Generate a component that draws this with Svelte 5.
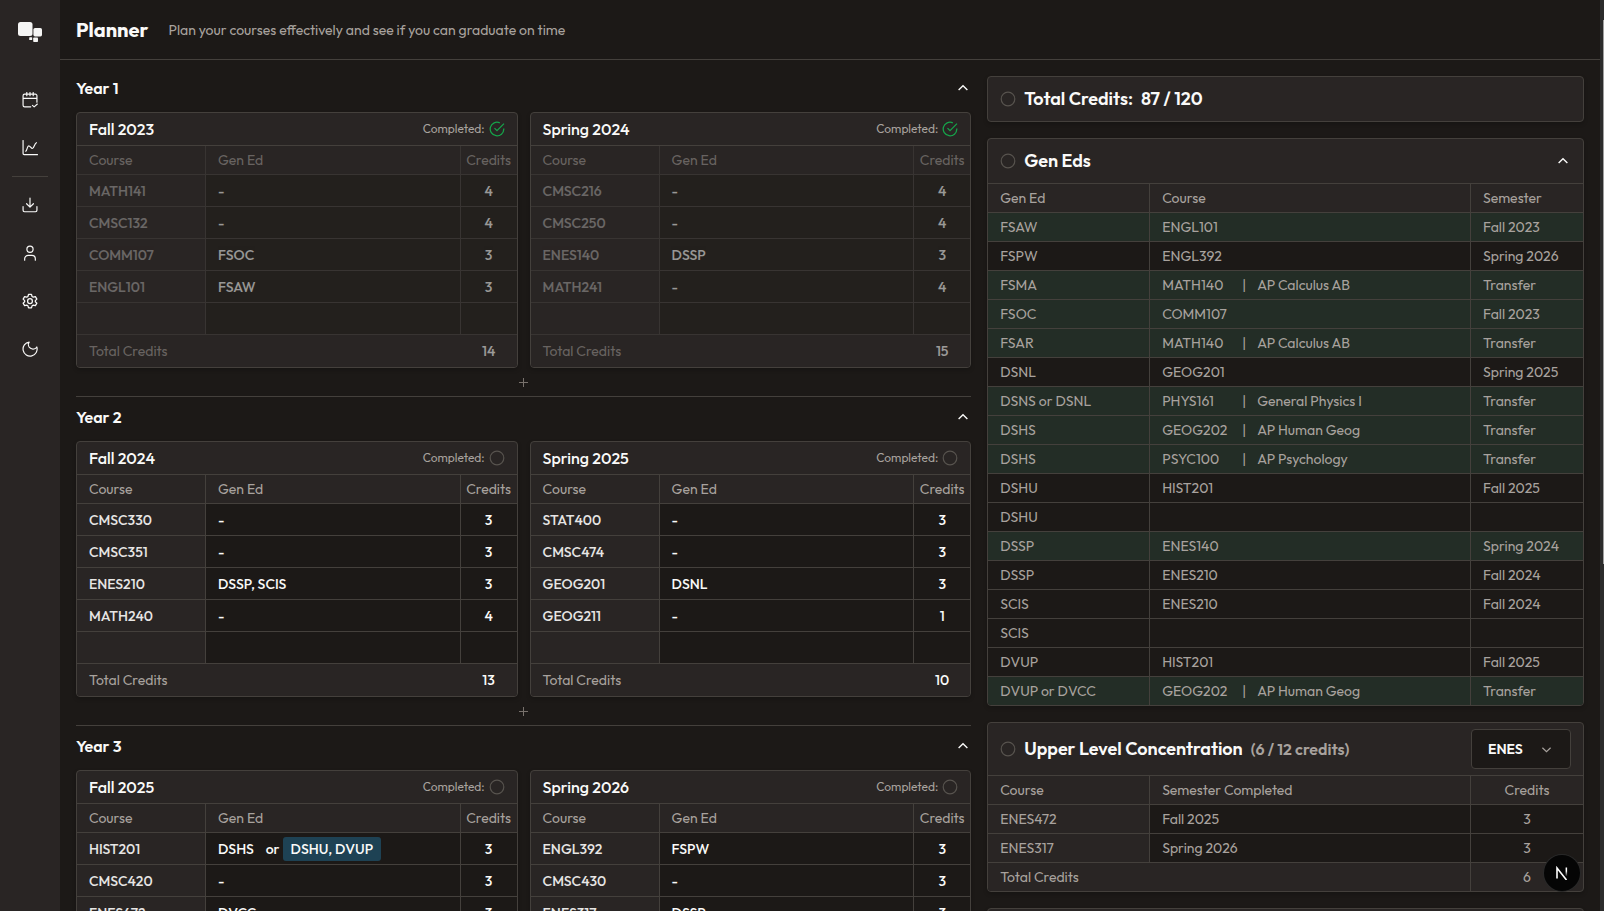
<script>
  const terms = [
    { year: 'Year 1', plans: [
      { name: 'Fall 2023', done: true, total: 14, rows: [['MATH141', '-', 4], ['CMSC132', '-', 4], ['COMM107', 'FSOC', 3], ['ENGL101', 'FSAW', 3], ['', '', '']] },
      { name: 'Spring 2024', done: true, total: 15, rows: [['CMSC216', '-', 4], ['CMSC250', '-', 4], ['ENES140', 'DSSP', 3], ['MATH241', '-', 4], ['', '', '']] }
    ] },
    { year: 'Year 2', plans: [
      { name: 'Fall 2024', done: false, total: 13, rows: [['CMSC330', '-', 3], ['CMSC351', '-', 3], ['ENES210', 'DSSP, SCIS', 3], ['MATH240', '-', 4], ['', '', '']] },
      { name: 'Spring 2025', done: false, total: 10, rows: [['STAT400', '-', 3], ['CMSC474', '-', 3], ['GEOG201', 'DSNL', 3], ['GEOG211', '-', 1], ['', '', '']] }
    ] },
    { year: 'Year 3', plans: [
      { name: 'Fall 2025', done: false, total: 9, rows: [['HIST201', ['DSHS', 'DSHU, DVUP'], 3], ['CMSC420', '-', 3], ['ENES472', 'DVCC', 3], ['', '', '']] },
      { name: 'Spring 2026', done: false, total: 9, rows: [['ENGL392', 'FSPW', 3], ['CMSC430', '-', 3], ['ENES317', 'DSSP', 3], ['', '', '']] }
    ] }
  ];

  const genEds = [
    ['FSAW', 'ENGL101', '', 'Fall 2023', true],
    ['FSPW', 'ENGL392', '', 'Spring 2026', false],
    ['FSMA', 'MATH140', 'AP Calculus AB', 'Transfer', true],
    ['FSOC', 'COMM107', '', 'Fall 2023', true],
    ['FSAR', 'MATH140', 'AP Calculus AB', 'Transfer', true],
    ['DSNL', 'GEOG201', '', 'Spring 2025', false],
    ['DSNS or DSNL', 'PHYS161', 'General Physics I', 'Transfer', true],
    ['DSHS', 'GEOG202', 'AP Human Geog', 'Transfer', true],
    ['DSHS', 'PSYC100', 'AP Psychology', 'Transfer', true],
    ['DSHU', 'HIST201', '', 'Fall 2025', false],
    ['DSHU', '', '', '', false],
    ['DSSP', 'ENES140', '', 'Spring 2024', true],
    ['DSSP', 'ENES210', '', 'Fall 2024', false],
    ['SCIS', 'ENES210', '', 'Fall 2024', false],
    ['SCIS', '', '', '', false],
    ['DVUP', 'HIST201', '', 'Fall 2025', false],
    ['DVUP or DVCC', 'GEOG202', 'AP Human Geog', 'Transfer', true]
  ];
</script>

{#snippet ring()}
  <svg class="ring" viewBox="0 0 16 16" aria-hidden="true"><circle cx="8" cy="8" r="6.8" /></svg>
{/snippet}

{#snippet caret()}
  <svg class="caret" viewBox="0 0 15 15" aria-hidden="true"><path d="M3.4 9.3 7.5 5.4l4.1 3.9" /></svg>
{/snippet}

<div class="app">
  <nav class="side">
    <a href="#home" class="logo" aria-label="Home">
      <svg viewBox="0 0 24 20">
        <rect x="0" y="0" width="14.5" height="14" rx="2.5" />
        <rect x="15.4" y="6" width="8.6" height="8.4" rx="1.6" />
        <rect x="15.2" y="15.4" width="4.8" height="4.6" rx="0.8" />
        <rect x="11.2" y="15.2" width="3" height="2.8" rx="0.6" />
      </svg>
    </a>
    <div class="group">
      <a href="#planner" aria-label="Planner"><svg viewBox="0 0 15 15"><path d="M8.200 13.900H2.500A1.500 1.500 0 0 1 1 12.400V3.500A1.500 1.500 0 0 1 2.500 2h10A1.500 1.500 0 0 1 14 3.500V9.500M1 6h13M4.500 .5V3.500M7.500 .5V3.500M10.500 .5V3.500M9.800 12.500l1.600 1.400 3-2.600" /></svg></a>
      <a href="#stats" aria-label="Statistics"><svg viewBox="0 0 15 15"><path d="M1 .5V12.700a1 1 0 0 0 1 1h12.500M3.500 10.500C5 9.500 4.800 5.500 6.300 5.500S8.300 8 9.800 8 11.500 3.500 13.500 2.500" /></svg></a>
    </div>
    <div class="group">
      <a href="#import" aria-label="Import"><svg viewBox="0 0 15 15"><path d="M7.500 1v8.300M4.300 6.300l3.200 3.200 3.200-3.200M1 9v3.500A1.300 1.300 0 0 0 2.300 13.800h10.400a1.300 1.300 0 0 0 1.300-1.300V9" /></svg></a>
      <a href="#account" aria-label="Account"><svg viewBox="0 0 15 15"><circle cx="7.500" cy="4" r="2.900" /><path d="M2.500 14.200v-1.200a3.300 3.300 0 0 1 3.300-3.300h3.400a3.300 3.300 0 0 1 3.300 3.300v1.200" /></svg></a>
      <a href="#settings" aria-label="Settings"><svg viewBox="0 0 24 24" class="wide"><path d="M9.800 2h4.400l.9 3.200 1.800 1 3.200-.8 2.200 3.800L20 11.500v1.600l2.300 2.100-2.200 3.800-3.200-.8-1.800 1-.9 3.200H9.800l-.9-3.200-1.800-1-3.200.8-2.200-3.800L4 13.100v-1.600L1.700 9.200l2.200-3.800 3.200.8 1.800-1z" /><circle cx="12" cy="12.200" r="3.600" /></svg></a>
      <button aria-label="Toggle theme"><svg viewBox="0 0 15 15"><path d="M6.700 1a3.900 3.900 0 0 0 7.200 4.600A6.600 6.600 0 1 1 6.700 1z" /></svg></button>
    </div>
  </nav>

  <div class="page">
    <header>
      <h1>Planner</h1>
      <p>Plan your courses effectively and see if you can graduate on time</p>
    </header>

    <main>
      <div class="years">
        {#each terms as term}
          <section class="year">
            <div class="year-head">
              <h2>{term.year}</h2>
              <button class="plain" aria-label="Collapse {term.year}">{@render caret()}</button>
            </div>
            <div class="pair">
              {#each term.plans as plan}
                <article class="card">
                  <div class="plan-head">
                    <h3>{plan.name}</h3>
                    <button class="plain status">
                      Completed:
                      {#if plan.done}
                        <svg class="ring ok" viewBox="0 0 16 16" aria-hidden="true"><path d="M14.800 7.400V8A6.800 6.800 0 1 1 10.800 1.800M15 2.600 8 9.600 5.500 7.100" /></svg>
                      {:else}
                        {@render ring()}
                      {/if}
                    </button>
                  </div>
                  <table class="plan" class:done={plan.done}>
                    <colgroup><col class="c1" /><col /><col class="c3" /></colgroup>
                    <thead><tr><th><span>Course</span></th><th><span>Gen Ed</span></th><th><span>Credits</span></th></tr></thead>
                    <tbody>
                      {#each plan.rows as [course, gen, credits]}
                        <tr>
                          <td><span>{course}</span></td>
                          <td>
                            {#if Array.isArray(gen)}
                              <div class="options"><button class="plain">{gen[0]}</button><span>or</span><button class="plain chosen">{gen[1]}</button></div>
                            {:else}
                              <span>{gen}</span>
                            {/if}
                          </td>
                          <td><span>{credits}</span></td>
                        </tr>
                      {/each}
                    </tbody>
                    <tfoot><tr><td colspan="2"><span>Total Credits</span></td><td><span>{plan.total}</span></td></tr></tfoot>
                  </table>
                </article>
              {/each}
            </div>
            <div class="add"><button class="plain" aria-label="Add semester"><svg viewBox="0 0 9 9"><path d="M4.500 0v9M0 4.500h9" /></svg></button></div>
          </section>
        {/each}
      </div>

      <div class="reqs">
        <article class="card"><div class="req-head">{@render ring()}<h2>Total Credits:</h2><h2>87 / 120</h2></div></article>

        <article class="card">
          <div class="req-head lined">{@render ring()}<h2>Gen Eds</h2><button class="plain end" aria-label="Collapse Gen Eds">{@render caret()}</button></div>
          <table class="req">
            <colgroup><col class="r1" /><col /><col class="r3" /></colgroup>
            <thead><tr><th>Gen Ed</th><th>Course</th><th>Semester</th></tr></thead>
            <tbody>
              {#each genEds as [code, course, exam, when, met]}
                <tr class:met>
                  <td>{code}</td>
                  <td><div class="course"><span>{course}</span>{#if exam}<i>|</i><span>{exam}</span>{/if}</div></td>
                  <td>{when}</td>
                </tr>
              {/each}
            </tbody>
          </table>
        </article>

        <article class="card">
          <div class="req-head lined tall">
            {@render ring()}
            <h2>Upper Level Concentration</h2><span class="sub">(6 / 12 credits)</span>
            <div class="picker">
              <select aria-label="Concentration"><option>ENES</option></select>
              <svg viewBox="0 0 15 15" aria-hidden="true"><path d="M3.400 5.700 7.500 9.600l4.100-3.900" /></svg>
            </div>
          </div>
          <table class="req upper">
            <colgroup><col class="r1" /><col /><col class="r3" /></colgroup>
            <thead><tr><th>Course</th><th>Semester Completed</th><th>Credits</th></tr></thead>
            <tbody>
              <tr><td>ENES472</td><td>Fall 2025</td><td>3</td></tr>
              <tr><td>ENES317</td><td>Spring 2026</td><td>3</td></tr>
            </tbody>
            <tfoot><tr><td colspan="2">Total Credits</td><td>6</td></tr></tfoot>
          </table>
        </article>

        <article class="card"><div class="req-head">{@render ring()}</div></article>
      </div>
    </main>
  </div>

  <div class="track"><div class="thumb"></div></div>

  <button class="dev" aria-label="Developer tools">
    <svg viewBox="0 0 14 14" aria-hidden="true">
      <defs><linearGradient id="fade" x1="0" y1="0" x2="0" y2="1"><stop offset="0.4" stop-color="#fff" /><stop offset="1" stop-color="#fff" stop-opacity="0" /></linearGradient></defs>
      <path d="M2 12.500V2l9.500 12" stroke="#fff" />
      <rect x="10.600" y="1.500" width="1.500" height="9" fill="url(#fade)" />
    </svg>
  </button>
</div>

<style>
  :global(body) { margin: 0; background: #1c1917; }
  .app {
    --line: #44403c;
    --panel: #292524;
    --muted: #a8a29e;
    height: 100vh; overflow: hidden; display: flex; color: #fafaf9; background: #1c1917;
    font: 14px/20px Outfit, Lato, sans-serif;
  }
  h1, h2, h3, p { margin: 0; }
  a, button, select { color: inherit; font: inherit; }
  svg { display: block; fill: none; stroke: currentColor; }
  .plain { border: 0; background: none; padding: 0; }

  .side { flex: 0 0 60px; background: var(--panel); display: flex; flex-direction: column; align-items: center; }
  .logo { margin: 22px 0 34px; }
  .logo svg { width: 24px; height: 20px; fill: #f5f5f4; stroke: none; }
  .group { width: 36px; display: flex; flex-direction: column; }
  .group + .group { border-top: 1px solid var(--line); margin-top: 4px; padding-top: 4px; }
  .group a, .group button { height: 48px; display: grid; place-items: center; background: none; border: 0; padding: 0; }
  .group svg { width: 16px; height: 16px; stroke-width: 1.1; stroke-linecap: round; stroke-linejoin: round; }
  .group svg.wide { stroke-width: 1.9; }

  .page { flex: 1; min-width: 0; }
  header { height: 59px; border-bottom: 1px solid var(--line); padding: 0 16px; display: flex; align-items: center; gap: 20px; }
  h1 { font-size: 20px; font-weight: 700; }
  header p { color: var(--muted); }
  main { display: grid; grid-template-columns: 3fr 2fr; gap: 16px; padding: 0 16px; }
  .years, .reqs { min-width: 0; }
  .years { padding-top: 8px; }
  .year + .year { border-top: 1px solid var(--line); }
  .year-head { height: 40px; padding-bottom: 4px; display: flex; align-items: center; justify-content: space-between; }
  .year-head h2 { font-size: 16px; font-weight: 600; }
  .caret { width: 16px; height: 16px; stroke-width: 1.3; }
  .pair { display: grid; grid-template-columns: 1fr 1fr; gap: 12px; }
  .card { min-width: 0; border: 1px solid var(--line); border-radius: 4px; background: var(--panel); overflow: hidden; box-shadow: 0 2px 4px #0003; }
  .plan-head { height: 32px; padding: 0 12px; display: flex; align-items: center; justify-content: space-between; border-bottom: 1px solid var(--line); }
  h3 { font-size: 16px; font-weight: 500; }
  .status { display: flex; align-items: center; gap: 4px; color: var(--muted); font-size: 12px; }
  .ring { flex: none; width: 16px; height: 16px; color: #57534e; stroke-width: 1.2; }
  .ok { color: #16a34a; stroke-width: 1.3; }

  table { width: 100%; table-layout: fixed; border-collapse: separate; border-spacing: 0; }
  th, td { box-sizing: border-box; padding: 0 12px; text-align: left; font-weight: 400; border-bottom: 1px solid var(--line); border-right: 1px solid var(--line); white-space: nowrap; }
  th:last-child, td:last-child { border-right: 0; }
  tfoot td { border-bottom: 0; }
  th { color: var(--muted); height: 29px; }
  tbody td { background: #1c1917; }
  .c1 { width: 129px; }
  .c3 { width: 56px; }
  .plan td { height: 32px; font-weight: 500; }
  .plan tbody td:first-child { background: var(--panel); color: #e7e5e4; }
  .plan th:last-child, .plan td:last-child { padding: 0; text-align: center; }
  .plan tfoot td { background: var(--panel); border-right: 0; }
  .plan tfoot td:first-child { color: var(--muted); font-weight: 400; }
  .done span { opacity: 0.55; }
  .done th, .done td { border-color: #383432; }
  .done tbody td { background: #23201d; }
  .done tbody td:first-child span { opacity: 0.34; }
  .done th span, .done tfoot td:first-child span { opacity: 0.5; }
  .options { display: flex; align-items: center; }
  .options > span { margin: 0 3px 0 12px; }
  .chosen { padding: 2px 8px; border-radius: 3px; background: #1e4254; }
  .add { height: 28px; display: grid; place-items: center; color: #78716c; }
  .add svg { width: 9px; height: 9px; }

  .reqs { display: flex; flex-direction: column; gap: 16px; padding-top: 16px; }
  .req-head { height: 44px; padding: 0 12px; display: flex; align-items: center; }
  .lined { border-bottom: 1px solid var(--line); }
  .tall { height: 52px; }
  .req-head h2 { margin-left: 8px; font-size: 18px; font-weight: 600; }
  .sub { margin-left: 8px; font-size: 16px; font-weight: 600; color: var(--muted); }
  .end { margin-left: auto; }
  .req { color: var(--muted); }
  .req td { height: 29px; }
  .req tbody tr:last-child td { border-bottom-width: 0; height: 28px; }
  .req.upper tbody tr:last-child td { border-bottom-width: 1px; height: 29px; }
  .r1 { width: 162px; }
  .r3 { width: 112px; }
  .met td { background: #232d26; }
  .course { display: flex; }
  .course span:first-child { width: 80px; }
  .course i { font-style: normal; width: 15px; }
  .upper td:first-child { background: var(--panel); }
  .upper tfoot td { height: 28px; }
  .upper th:last-child, .upper td:last-child { text-align: center; }
  .picker { margin-left: auto; display: grid; align-items: center; }
  .picker > * { grid-area: 1 / 1; }
  select { appearance: none; width: 100px; height: 40px; padding: 0 16px; border: 1px solid var(--line); border-radius: 4px; background: #1c1917; font-weight: 600; }
  .picker svg { justify-self: end; margin-right: 17px; width: 15px; height: 15px; stroke-width: 1.2; color: var(--muted); pointer-events: none; }

  .track { flex: 0 0 4px; box-sizing: border-box; padding-top: 20px; background: #2c2c2c; }
  .thumb { width: 1px; margin-left: auto; height: 61%; background: #9f9f9f; }
  .dev { position: fixed; right: 24px; bottom: 20px; width: 36px; height: 36px; padding: 0; border: 0; border-radius: 50%; background: #050505; box-shadow: 0 0 0 1px #292929; display: grid; place-items: center; }
  .dev svg { width: 14px; height: 14px; stroke-width: 1.600; stroke: none; }
</style>
